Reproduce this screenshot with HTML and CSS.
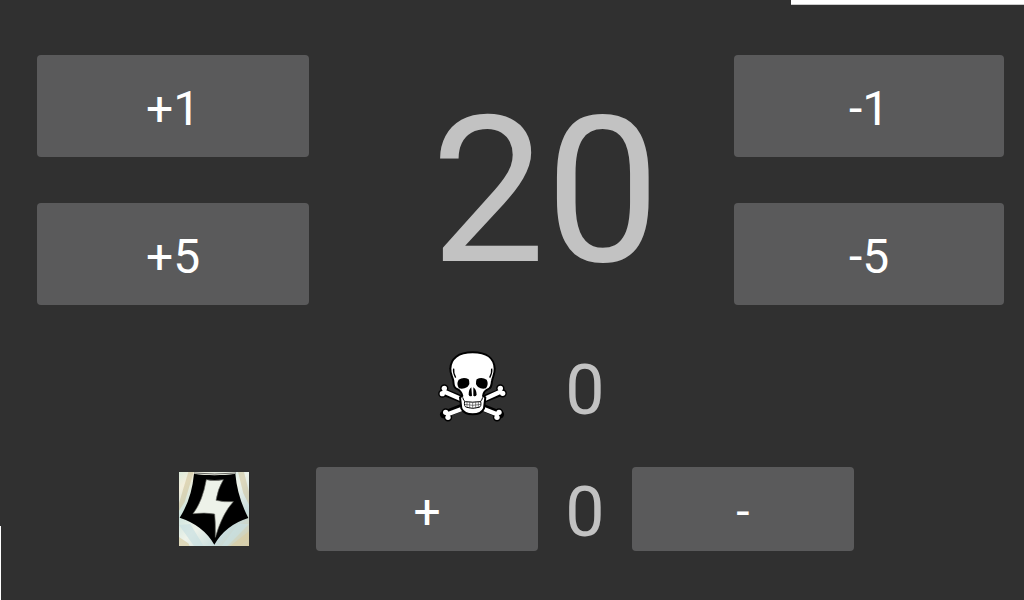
FILE: index.html
```html
<!DOCTYPE html>
<html lang="en">
<head>
<meta charset="utf-8">
<meta name="viewport" content="width=device-width, initial-scale=1">
<title>Life counter</title>
<link rel="stylesheet" href="styles.css">
</head>
<body>
<main class="counter">
  <section class="life">
    <div class="stack">
      <button class="btn" type="button">+1</button>
      <button class="btn" type="button">+5</button>
    </div>
    <output class="total">20</output>
    <div class="stack">
      <button class="btn" type="button">-1</button>
      <button class="btn" type="button">-5</button>
    </div>
  </section>
  <section class="extras">
    <svg class="skull" viewBox="21 15 210 216" aria-hidden="true">
      <g stroke-linecap="round" fill="none">
        <g stroke="#000" stroke-width="22">
          <path d="M38 138L208 206M38 206L212 138"/>
        </g>
        <g fill="#000" stroke="#000" stroke-width="9">
          <circle cx="40" cy="127" r="8"/><circle cx="34" cy="143" r="8"/>
          <circle cx="208" cy="127" r="8"/><circle cx="215" cy="142" r="8"/>
          <circle cx="44" cy="199" r="8"/><circle cx="51" cy="214" r="8"/>
          <circle cx="204" cy="199" r="8"/><circle cx="198" cy="214" r="8"/>
        </g>
        <g fill="#fff">
          <circle cx="40" cy="127" r="8"/><circle cx="34" cy="143" r="8"/>
          <circle cx="208" cy="127" r="8"/><circle cx="215" cy="142" r="8"/>
          <circle cx="44" cy="199" r="8"/><circle cx="51" cy="214" r="8"/>
          <circle cx="204" cy="199" r="8"/><circle cx="198" cy="214" r="8"/>
        </g>
        <path stroke="#fff" stroke-width="13" d="M40 137L88 158M208 137L162 158M50 205L92 189M198 205L158 189"/>
      </g>
      <path fill="#fff" stroke="#000" stroke-width="6" stroke-linejoin="round" d="M125 19C82 19 59 38 58 68C57 84 65 92 67 105C68 115 67 124 76 128C86 132 92 139 94 150L87 154L91 187C97 200 111 205 125 205C139 205 154 199 159 187L163 154L156 150C157 139 164 132 174 128C183 124 181 115 183 105C185 92 192 84 191 68C190 38 168 19 125 19Z"/>
      <path fill="none" stroke="#000" stroke-width="4" d="M68 68Q66 80 74 95M182 68Q184 80 176 95"/>
      <path d="M83 101Q98 92 113 100Q119 114 109 123Q96 131 84 127Q75 114 83 101ZM137 100Q152 92 167 101Q174 114 165 127Q152 131 141 123Q131 114 137 100ZM121 124Q113 130 113 146Q116 154 123 149ZM127 124Q136 130 137 146Q133 154 127 149Z"/>
      <path fill="none" stroke="#000" stroke-width="3" d="M95 154Q97 165 103 167Q125 170 147 167Q153 165 155 154M101 166Q98 182 107 184Q125 190 144 184Q152 182 149 166"/>
      <path fill="none" stroke="#444" stroke-width="2" d="M101 175Q125 181 150 175M108 166V184M116 167V187M125 168V188M134 167V187M142 166V184"/>
    </svg>
    <output class="count count-top">0</output>
    <svg class="emblem" viewBox="21 18 210 222" preserveAspectRatio="none" aria-hidden="true">
      <defs>
        <linearGradient id="pearl" x1="0" y1="0" x2="1" y2="1">
          <stop offset="0" stop-color="#dcebdc"/>
          <stop offset=".12" stop-color="#f3eedb"/>
          <stop offset=".3" stop-color="#cfe5de"/>
          <stop offset=".5" stop-color="#eef3ea"/>
          <stop offset=".75" stop-color="#c8dcdc"/>
          <stop offset="1" stop-color="#d9cda4"/>
        </linearGradient>
      </defs>
      <path fill="url(#pearl)" d="M21 18H231V240H21Z"/>
      <path fill="#cbbd91" d="M49 18H65L38 108L21 134V112ZM198 18H216L231 78V116L214 82Z" opacity=".5"/>
      <path fill="#c9dfe1" d="M21 177L55 174L95 240H66ZM231 174L166 240H149L198 174Z" opacity=".7"/>
      <path fill="#d9cda5" d="M21 213L49 232L53 240H21ZM174 240L231 196V218L203 240Z" opacity=".7"/>
      <path fill="#000" d="M66 23Q126 31 190 23Q196 92 229 156Q161 177 127 236Q94 178 23 155Q59 99 66 23Z"/>
      <path fill="#f0f1e5" d="M68 19H190L188 24Q127 31 68 24Z"/>
      <path fill="none" stroke="#222" stroke-width="2" d="M66 21Q127 27 192 21"/>
      <path fill="#edf2e9" stroke="#71736c" stroke-width="2" d="M103 41Q127 46 154 41Q137 69 132 103Q155 109 184 107Q151 142 130 214Q131 171 128 144Q99 139 63 143Q91 108 103 41Z"/>
    </svg>
    <button class="btn btn-add" type="button">+</button>
    <output class="count count-bottom">0</output>
    <button class="btn btn-sub" type="button">-</button>
  </section>
</main>
</body>
</html>
```
FILE: styles.css
```css
* {
  box-sizing: border-box;
}

body {
  margin: 0;
  background: #303030;
  color: #c2c2c2;
  font-family: Roboto, "Liberation Sans", sans-serif;
}

.counter {
  position: relative;
  display: flex;
  flex-direction: column;
  gap: 37px;
  min-height: 100vh;
  padding-top: 55px;
}

/* Light slivers along the window's edges */
.counter::before,
.counter::after {
  content: "";
  position: absolute;
  background: #fff;
}

.counter::before {
  top: 0;
  right: 0;
  width: 233px;
  height: 4px;
  border-bottom: 1px solid #ccc;
}

.counter::after {
  bottom: 0;
  left: 0;
  width: 1px;
  height: 74px;
}

.life {
  display: grid;
  grid-template-columns: 272fr 425fr 270fr;
  padding: 0 20px 0 37px;
}

.stack {
  display: grid;
  gap: 46px;
}

.btn {
  min-height: 102px;
  padding: 6px 0 0;
  border: 0;
  border-radius: 4px;
  background: #5a5a5b;
  color: #fff;
  font: 400 48px/60px Roboto, "Liberation Sans", sans-serif;
}

.total {
  align-self: center;
  padding: 24px 0 0 48px;
  font-size: 204px;
  line-height: 220px;
  text-align: center;
}

.extras {
  display: grid;
  grid-template-columns: 179fr 70px 67fr 222fr 94fr 222fr 170fr;
  row-gap: 32px;
  align-items: center;
}

.extras .btn {
  min-height: 84px;
}

.skull {
  grid-area: 1 / 4;
  justify-self: end;
  width: 70px;
  height: 72px;
  margin-right: 30px;
}

.emblem {
  grid-area: 2 / 2;
  width: 70px;
  height: 74px;
}

.count {
  padding-top: 6px;
  font-size: 70px;
  line-height: 84px;
  text-align: center;
}

.count-top {
  grid-area: 1 / 5;
}

.count-bottom {
  grid-area: 2 / 5;
}

.btn-add {
  grid-area: 2 / 4;
}

.btn-sub {
  grid-area: 2 / 6;
}
```
